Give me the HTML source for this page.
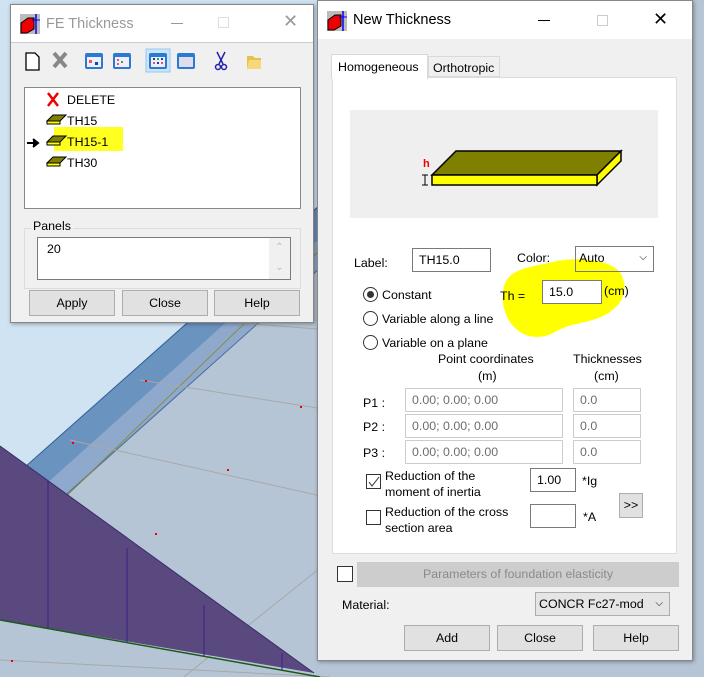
<!DOCTYPE html>
<html><head><meta charset="utf-8"><style>
*{box-sizing:border-box;margin:0;padding:0}
body{width:704px;height:677px;overflow:hidden;position:relative;font-family:"Liberation Sans",sans-serif;font-size:12.4px;color:#000;background:#b6c5d6}
.a{position:absolute}
.win{position:absolute;background:#f0f0f0;border:1px solid #888;box-shadow:1px 1px 4px rgba(0,0,0,.35)}
.tb{position:absolute;left:0;right:0;top:0;background:#fff}
.btn{position:absolute;background:#e1e1e1;border:1px solid #adadad;text-align:center;font-size:12.4px}
.inp{position:absolute;background:#fff;border:1px solid #7a7a7a;padding-left:6px;font-size:12.4px}
.dis{border-color:#ccc;color:#6d6d6d}
.rad{position:absolute;width:15px;height:15px;border:1px solid #333;border-radius:50%;background:#fff}
.chk{position:absolute;width:15px;height:15px;border:1px solid #333;background:#fff}
</style></head><body>
<svg class="a" style="left:0;top:0" width="704" height="677">
<polygon points="0,0 330,0 330,195 0,490" fill="#cfe3f3"/>
<polygon points="25,467 320,205 320,268 60,500" fill="#6b93c0"/>
<polygon points="45,485 320,238 320,268 62,500" fill="#8fa9cc"/>
<line x1="25" y1="467" x2="320" y2="205" stroke="#2f5f93"/>
<line x1="60" y1="500" x2="320" y2="268" stroke="#4a6f9b"/>
<line x1="52" y1="510" x2="320" y2="250" stroke="#888820" stroke-width="0.8"/>
<g stroke="#a8a8a8" stroke-width="1" fill="none">
<line x1="70" y1="440" x2="330" y2="498"/><line x1="140" y1="380" x2="330" y2="410"/>
<line x1="330" y1="560" x2="180" y2="680"/><line x1="0" y1="660" x2="330" y2="677"/>
<line x1="200" y1="320" x2="330" y2="330"/>
</g>
<polygon points="0,446 314,673 0,620" fill="#59497f"/>
<line x1="0" y1="446" x2="314" y2="673" stroke="#3a2a6a"/>
<line x1="0" y1="620" x2="320" y2="677" stroke="#1c5a1c" stroke-width="1.5"/>
<g stroke="#3a1f8a"><line x1="48" y1="481" x2="48" y2="628"/><line x1="127" y1="548" x2="127" y2="642"/><line x1="204" y1="605" x2="204" y2="656"/><line x1="282" y1="653" x2="282" y2="670"/></g>
<g fill="#e00"><rect x="145" y="380" width="2" height="2"/><rect x="72" y="442" width="2" height="2"/><rect x="300" y="406" width="2" height="2"/><rect x="227" y="469" width="2" height="2"/><rect x="155" y="533" width="2" height="2"/><rect x="11" y="660" width="2" height="2"/></g>
</svg>

<!-- FE Thickness -->
<div class="win" style="left:10px;top:4px;width:304px;height:319px">
 <div class="tb" style="height:38px;border-bottom:1px solid #ccc">
  <svg class="a" style="left:9px;top:9px" width="20" height="20"><rect width="20" height="20" fill="#bbb"/><polygon points="1,9 8,4 14,4 14,15 7,19 1,19" fill="#e00" stroke="#000"/><line x1="16" y1="0" x2="16" y2="20" stroke="#00f" stroke-width="1.5"/><line x1="12" y1="6" x2="20" y2="6" stroke="#00f"/></svg>
  <div class="a" style="left:35px;top:11px;font-size:14.5px;color:#999">FE Thickness</div>
  <div class="a" style="left:160px;top:18px;width:12px;height:1px;background:#999"></div>
  <div class="a" style="left:207px;top:12px;width:11px;height:11px;border:1px solid #ddd"></div>
  <div class="a" style="left:272px;top:6px;font-size:18px;color:#999">✕</div>
 </div>
 <svg class="a" style="left:10px;top:42px" width="240" height="26">
  <path d="M5 6h9l4 4v13H5z" fill="#fff" stroke="#000" stroke-width="1.3"/>
  <path d="M33 6l12 14M45 6L33 20" stroke="#888" stroke-width="4"/>
  <g><rect x="64" y="6" width="18" height="16" rx="2" fill="#2a7bd0"/><rect x="66" y="10" width="14" height="10" fill="#eef"/><rect x="68" y="13" width="3" height="3" fill="#e55"/><rect x="74" y="15" width="3" height="3" fill="#14a"/></g>
  <g><rect x="92" y="6" width="18" height="16" rx="2" fill="#2a7bd0"/><rect x="94" y="10" width="14" height="10" fill="#eef"/><rect x="96" y="12" width="2" height="2" fill="#e55"/><rect x="100" y="14" width="2" height="2" fill="#3a3"/><rect x="96" y="16" width="2" height="2" fill="#e55"/></g>
  <rect x="125" y="2" width="24" height="23" fill="#cce4f7" stroke="#99c9ef"/>
  <g><rect x="128" y="6" width="18" height="16" rx="2" fill="#2a7bd0"/><rect x="130" y="10" width="14" height="10" fill="#eef"/><rect x="132" y="11" width="2" height="2" fill="#14a"/><rect x="136" y="11" width="2" height="2" fill="#3a3"/><rect x="140" y="11" width="2" height="2" fill="#14a"/><rect x="132" y="15" width="2" height="2" fill="#e55"/><rect x="136" y="15" width="2" height="2" fill="#14a"/><rect x="140" y="15" width="2" height="2" fill="#e55"/></g>
  <g><rect x="156" y="6" width="18" height="16" rx="2" fill="#2a7bd0"/><rect x="158" y="10" width="14" height="10" fill="#dde"/></g>
  <g stroke="#22a" stroke-width="1.5" fill="none"><path d="M196 5l6 12M204 5l-6 12"/><circle cx="197" cy="20" r="2.5"/><circle cx="203" cy="20" r="2.5"/></g>
  <path d="M226 9h6l2 2h8v11h-16z" fill="#e8c050"/><path d="M228 13h16l-3 9h-15z" fill="#f6d878"/><circle cx="244" cy="8" r="3" fill="#f55"/>
 </svg>
 <div class="a" style="left:13px;top:82px;width:277px;height:122px;background:#fff;border:1px solid #888">
  <div class="a" style="left:29px;top:39px;width:69px;height:24px;background:#ffff20"></div>
  <svg class="a" style="left:0;top:0" width="80" height="90">
   <path d="M23 5l10 13M33 5L23 18" stroke="#e00" stroke-width="2.5"/>
   <g fill="#808000" stroke="#000"><path d="M22 33l6-6h13l-6 6z"/><path d="M22 54l6-6h13l-6 6z"/><path d="M22 75l6-6h13l-6 6z"/></g>
   <g fill="#ff0" stroke="#000"><rect x="22" y="33" width="13" height="3"/><rect x="22" y="54" width="13" height="3"/><rect x="22" y="75" width="13" height="3"/></g>
   <path d="M2 55h10M8 51l5 4-5 4" stroke="#000" stroke-width="2" fill="#000"/>
  </svg>
  <div class="a" style="left:42px;top:5px">DELETE</div>
  <div class="a" style="left:42px;top:26px">TH15</div>
  <div class="a" style="left:42px;top:47px">TH15-1</div>
  <div class="a" style="left:42px;top:68px">TH30</div>
 </div>
 <div class="a" style="left:13px;top:223px;width:277px;height:61px;border:1px solid #dcdcdc"></div>
 <div class="a" style="left:20px;top:214px;background:#f0f0f0;padding:0 2px">Panels</div>
 <div class="a" style="left:26px;top:232px;width:254px;height:43px;background:#fff;border:1px solid #7a7a7a"><div class="a" style="left:9px;top:4px">20</div><div class="a" style="right:0;top:0;width:21px;height:41px;background:#f0f0f0;color:#bbb;font-size:10px;text-align:center;line-height:20px">⌃<br>⌄</div></div>
 <div class="btn" style="left:18px;top:285px;width:86px;height:26px;line-height:24px">Apply</div>
 <div class="btn" style="left:111px;top:285px;width:86px;height:26px;line-height:24px">Close</div>
 <div class="btn" style="left:203px;top:285px;width:86px;height:26px;line-height:24px">Help</div>
</div>

<!-- New Thickness -->
<div class="win" style="left:317px;top:0;width:376px;height:661px">
 <div class="tb" style="height:38px">
  <svg class="a" style="left:9px;top:10px" width="20" height="20"><rect width="20" height="20" fill="#bbb"/><polygon points="1,9 8,4 14,4 14,15 7,19 1,19" fill="#e00" stroke="#000"/><line x1="16" y1="0" x2="16" y2="20" stroke="#00f" stroke-width="1.5"/><line x1="12" y1="6" x2="20" y2="6" stroke="#00f"/></svg>
  <div class="a" style="left:35px;top:11px;font-size:14.5px">New Thickness</div>
  <div class="a" style="left:220px;top:19px;width:12px;height:1px;background:#000"></div>
  <div class="a" style="left:279px;top:14px;width:11px;height:11px;border:1px solid #ccc"></div>
  <div class="a" style="left:335px;top:8px;font-size:18px">✕</div>
 </div>
 <div class="a" style="left:14px;top:76px;width:345px;height:477px;background:#fff;border:1px solid #dcdcdc"></div>
 <div class="a" style="left:13px;top:53px;width:97px;height:25px;background:#fff;border:1px solid #d9d9d9;border-bottom:none;padding:5px 0 0 6px">Homogeneous</div>
 <div class="a" style="left:110px;top:55px;width:72px;height:21px;background:#f0f0f0;border:1px solid #d9d9d9;padding:4px 0 0 4px">Orthotropic</div>
 <div class="a" style="left:32px;top:109px;width:308px;height:108px;background:#efefef"></div>
 <svg class="a" style="left:100px;top:145px" width="210" height="45">
  <polygon points="14,29 38,5 203,5 179,29" fill="#808000" stroke="#000" stroke-width="1.5"/>
  <polygon points="179,29 203,5 203,15 179,39" fill="#ff0" stroke="#000" stroke-width="1.5"/>
  <rect x="14" y="29" width="165" height="10" fill="#ff0" stroke="#000" stroke-width="1.5"/>
  <path d="M7 29v10M4 29h6M4 39h6" stroke="#000"/>
  <text x="5" y="21" fill="#e00" font-weight="bold" font-size="11" font-family="Liberation Sans">h</text>
 </svg>
 <div class="a" style="left:36px;top:255px">Label:</div>
 <div class="inp" style="left:94px;top:247px;width:79px;height:24px;line-height:22px">TH15.0</div>
 <div class="a" style="left:199px;top:250px">Color:</div>
 <svg class="a" style="left:175px;top:255px" width="140" height="85"><path d="M60 6c25-6 60-2 68 12c8 16 2 30-14 40c-18 10-35 8-52 18c-14 8-30 6-40-4c-12-12-15-30-10-45c6-14 25-16 48-21z" fill="#ffff00"/></svg>
 <div class="inp" style="left:257px;top:245px;width:79px;height:26px;line-height:22px;padding-left:3px;background:transparent">Auto<span style="position:absolute;right:6px;top:0;font-size:10px">⌵</span></div>
 <div class="rad" style="left:45px;top:286px"><div class="a" style="left:3px;top:3px;width:7px;height:7px;border-radius:50%;background:#333"></div></div>
 <div class="a" style="left:64px;top:287px">Constant</div>
 <div class="a" style="left:182px;top:288px">Th =</div>
 <div class="inp" style="left:224px;top:279px;width:60px;height:24px;line-height:22px">15.0</div>
 <div class="a" style="left:286px;top:283px">(cm)</div>
 <div class="rad" style="left:45px;top:310px"></div>
 <div class="a" style="left:64px;top:311px">Variable along a line</div>
 <div class="rad" style="left:45px;top:334px"></div>
 <div class="a" style="left:64px;top:335px">Variable on a plane</div>
 <div class="a" style="left:120px;top:351px">Point coordinates</div>
 <div class="a" style="left:160px;top:368px">(m)</div>
 <div class="a" style="left:255px;top:351px">Thicknesses</div>
 <div class="a" style="left:276px;top:368px">(cm)</div>
 <div class="a" style="left:45px;top:395px">P1 :</div>
 <div class="a" style="left:45px;top:419px">P2 :</div>
 <div class="a" style="left:45px;top:445px">P3 :</div>
 <div class="inp dis" style="left:87px;top:387px;width:158px;height:24px;line-height:22px">0.00; 0.00; 0.00</div>
 <div class="inp dis" style="left:255px;top:387px;width:68px;height:24px;line-height:22px">0.0</div>
 <div class="inp dis" style="left:87px;top:413px;width:158px;height:24px;line-height:22px">0.00; 0.00; 0.00</div>
 <div class="inp dis" style="left:255px;top:413px;width:68px;height:24px;line-height:22px">0.0</div>
 <div class="inp dis" style="left:87px;top:439px;width:158px;height:24px;line-height:22px">0.00; 0.00; 0.00</div>
 <div class="inp dis" style="left:255px;top:439px;width:68px;height:24px;line-height:22px">0.0</div>
 <div class="chk" style="left:48px;top:473px"><svg width="14" height="14"><path d="M2 7l3 4l7-9" stroke="#333" fill="none"/></svg></div>
 <div class="a" style="left:67px;top:467px;line-height:16px">Reduction of the<br>moment of inertia</div>
 <div class="inp" style="left:212px;top:467px;width:46px;height:24px;line-height:22px">1.00</div>
 <div class="a" style="left:264px;top:473px">*Ig</div>
 <div class="chk" style="left:48px;top:509px"></div>
 <div class="a" style="left:67px;top:503px;line-height:16px">Reduction of the cross<br>section area</div>
 <div class="inp" style="left:212px;top:503px;width:46px;height:24px"></div>
 <div class="a" style="left:265px;top:509px">*A</div>
 <div class="btn" style="left:301px;top:492px;width:24px;height:25px;line-height:22px">&gt;&gt;</div>
 <div class="chk" style="left:19px;top:565px;width:16px;height:16px"></div>
 <div class="btn" style="left:39px;top:561px;width:322px;height:25px;line-height:23px;background:#cdcdcd;border-color:#ccc;color:#8a8a8a">Parameters of foundation elasticity</div>
 <div class="a" style="left:24px;top:597px">Material:</div>
 <div class="inp" style="left:217px;top:591px;width:135px;height:24px;line-height:22px;background:#e5e5e5;border-color:#adadad;padding-left:3px">CONCR Fc27-mod<span style="position:absolute;right:6px;top:0;font-size:10px">⌵</span></div>
 <div class="btn" style="left:86px;top:624px;width:86px;height:26px;line-height:24px">Add</div>
 <div class="btn" style="left:179px;top:624px;width:86px;height:26px;line-height:24px">Close</div>
 <div class="btn" style="left:275px;top:624px;width:86px;height:26px;line-height:24px">Help</div>
</div>
</body></html>
